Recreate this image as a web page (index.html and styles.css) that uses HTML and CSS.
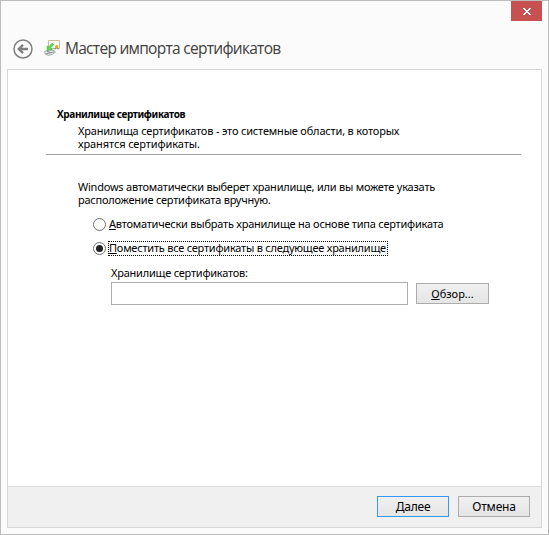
FILE: index.html
```html
<!DOCTYPE html>
<html lang="ru">
<head>
<meta charset="utf-8">
<title>Мастер импорта сертификатов</title>
<link rel="stylesheet" href="styles.css">
</head>
<body>
<div class="window">
  <div class="titlebar">
    <button class="close" aria-label="Закрыть"><svg width="8" height="7" viewBox="0 0 8 7" shape-rendering="crispEdges"><path fill="#fff" d="M0 0h2v1h1v1h2V1h1V0h2v1H7v1H6v1H5v1h1v1h1v1h1v1H6V6H5V5H3v1H2v1H0V6h1V5h1V4h1V3H2V2H1V1H0z"/></svg></button>
  </div>
  <header class="header">
    <svg class="back" width="20" height="20" viewBox="0 0 20 20" fill="none" stroke="#808080"><circle cx="10" cy="10" r="9" stroke-width="1.5"/><path stroke-width="2.4" d="M5.500 10h9.500M10 5.800L5.800 10l4.200 4.200"/></svg>
    <svg class="cert" width="17" height="16" viewBox="0 0 17 16"><path fill="#fffdf8" stroke="#d0bc90" d="M4.500.500h11v8h-11z"/><path fill="#3d6fb5" d="M11 7.500l-.500 2 1.500-.500zM14 7.500l.500 2-1.500-.500z"/><circle cx="12.700" cy="6.800" r="1.700" fill="#e5a321"/><path fill="#e6e9e9" stroke="#8f9799" stroke-width=".8" d="M.500 11.500l4-1.500 5 .500 2 1.500-3 2.500-4 .800-3-1z"/><path stroke="#6d7577" stroke-width=".8" fill="none" d="M2 14l3-1 5-1M3 11.500l3 .800"/><path fill="#5fdc52" stroke="#45b840" stroke-width=".8" d="M3.300 10.500V6l1.500.800L8 3.300l1.700 1.200-3 3.300 1.500 1.400z"/></svg>
    <h1 class="title">Мастер импорта сертификатов</h1>
  </header>
  <main class="panel">
    <section class="intro">
      <h2 class="heading">Хранилище сертификатов</h2>
      <p class="text">Хранилища сертификатов - это системные области, в которых<br><span class="loose">хранятся сертификаты.</span></p>
    </section>
    <section class="form">
      <p class="text">Windows автоматически выберет хранилище, или вы можете указать<br>расположение сертификата вручную.</p>
      <div class="option"><i class="radio"></i><span class="label"><u>А</u>втоматически выбрать хранилище на основе типа сертификата</span></div>
      <div class="option second"><i class="radio on"></i><span class="label focus"><u>П</u>оместить все сертификаты в следующее хранилище</span></div>
      <label class="field-label" for="store">Хранилище сертификатов:</label>
      <div class="field"><input id="store" class="input" type="text"><button class="btn browse"><span><u>О</u>бзор...</span></button></div>
    </section>
    <footer class="footer"><button class="btn primary"><span><u>Д</u>алее</span></button><button class="btn"><span>Отмена</span></button></footer>
  </main>
</div>
</body>
</html>
```
FILE: styles.css
```css
* { box-sizing: border-box; margin: 0; padding: 0; }
body { width: 549px; height: 535px; overflow: hidden; font: 11px/13px "Noto Sans", "Open Sans", sans-serif; letter-spacing: -0.23px; color: #000; }
.window { height: 535px; border: 1px solid #bdbdbd; background: #fbfbfb; padding: 0 6px; display: flex; flex-direction: column; }
.titlebar { height: 20px; display: flex; justify-content: flex-end; }
.close { width: 31px; height: 20px; border: 0; background: #c75050; display: flex; align-items: center; justify-content: center; padding: 1px 0 0 1px; }
.header { height: 48px; display: flex; align-items: center; padding: 7px 0 0 6px; }
.cert { margin-left: 11px; margin-top: -2px; }
.title { font: 15.5px/20px "Open Sans", "Noto Sans", sans-serif; letter-spacing: -0.72px; color: #404040; margin: -2px 0 0 4px; white-space: nowrap; }
.panel { height: 459px; border: 1px solid #d6d6d6; background: #fff; display: flex; flex-direction: column; }
.intro { margin: 38px 20px 0 38px; height: 47px; border-bottom: 1px solid #a0a0a0; white-space: nowrap; }
.heading { font-size: 10px; line-height: 13px; letter-spacing: -0.36px; padding-left: 11px; }
.intro .text { padding-left: 32px; margin-top: 3px; letter-spacing: -0.18px; }
.intro .loose { letter-spacing: -0.1px; }
.form { flex: 1; padding: 25px 0 0 70px; white-space: nowrap; }
u { text-decoration: underline; text-decoration-thickness: 1px; text-underline-offset: 1px; }
.option { display: flex; align-items: center; height: 16px; margin: 11px 0 0 15px; }
.option.second { margin-top: 8px; }
.radio { width: 13px; height: 13px; margin-top: -2px; border: 1px solid #707070; border-radius: 50%; background: #fff; display: flex; align-items: center; justify-content: center; }
.radio.on::before { content: ""; width: 7px; height: 7px; border-radius: 50%; background: #212121; }
.label { height: 15px; margin: -1px 0 0 2px; border: 1px solid transparent; line-height: 12px; }
.focus { width: 280px; border: 1px dotted #000; }
.field-label { display: block; margin: 9px 0 0 33px; }
.field { display: flex; align-items: center; margin: 3px 0 0 33px; }
.input { width: 297px; height: 23px; border: 1px solid #abadb3; background: #fff; font: inherit; }
.btn { width: 72px; height: 21px; border: 1px solid #acacac; background: linear-gradient(#f0f0f0, #e5e5e5); font-family: inherit; font-size: 12px; line-height: 13px; letter-spacing: -0.2px; color: #000; }
.browse { width: 73px; margin-left: 8px; font-size: 11px; letter-spacing: 0; }
.primary { border-color: #3399ff; }
.footer { height: 41px; border-top: 1px solid #dfdfdf; background: #f0f0f0; padding: 9px 11px 0 0; display: flex; justify-content: flex-end; gap: 9px; }
```
